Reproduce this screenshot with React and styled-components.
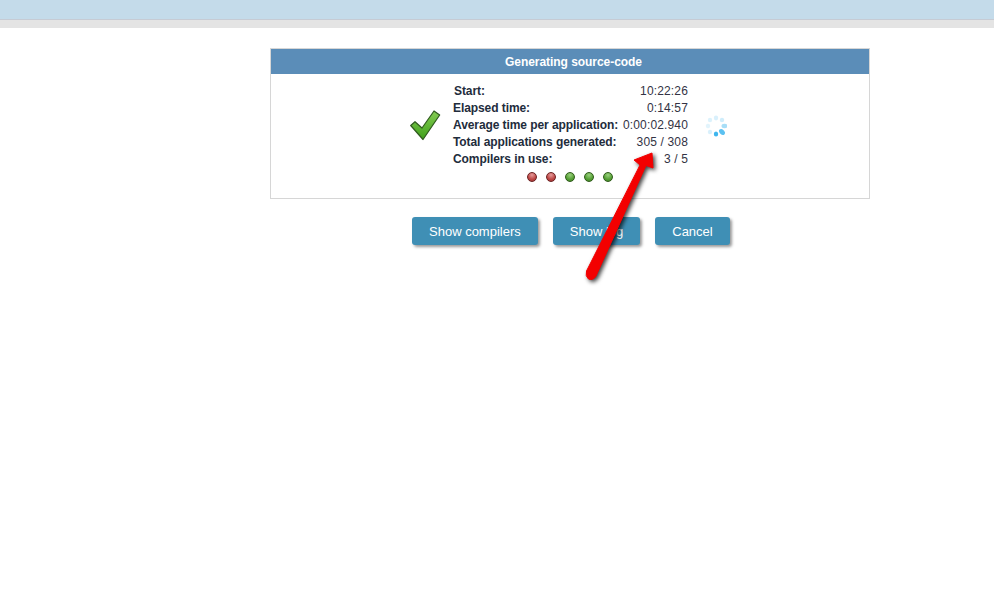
import React from "react";
import styled, { createGlobalStyle } from "styled-components";

const GlobalStyle = createGlobalStyle`
  html, body {
    margin: 0;
    padding: 0;
    background: #fff;
  }
  body {
    font-family: "Liberation Sans", Arial, sans-serif;
    font-size: 12px;
    color: #2a2a3a;
  }
`;

const Page = styled.div`
  position: relative;
  width: 994px;
  height: 614px;
  overflow: hidden;
`;

const TopBar = styled.div`
  height: 19px;
  background: #c4dbea;
  border-bottom: 1px solid #c6cbd4;
`;

const SubBar = styled.div`
  height: 8px;
  background: #e4e4e4;
`;

const Main = styled.div`
  width: 600px;
  margin: 20px 0 0 270px;
`;

const Panel = styled.section`
  box-sizing: border-box;
  height: 151px;
  border: 1px solid #d6d6d6;
`;

const PanelTitle = styled.h2`
  box-sizing: border-box;
  margin: 0;
  height: 25px;
  line-height: 26px;
  padding-left: 7px;
  background: #5b8db8;
  color: #fff;
  font-size: 12px;
  font-weight: bold;
  letter-spacing: -0.05px;
  text-align: center;
`;

const PanelBody = styled.div`
  padding-top: 9px;
`;

const Summary = styled.div`
  display: flex;
  justify-content: center;
  align-items: center;
  gap: 12px;
  padding-right: 4px;
`;

const StatsBlock = styled.div`
  width: 235px;
  margin-right: 5px;
`;

const Row = styled.div`
  display: flex;
  justify-content: space-between;
  height: 17px;
  line-height: 17px;
`;

const Label = styled.span`
  font-weight: bold;
  color: #222c3c;
  letter-spacing: -0.08px;
  padding-left: ${(p) => (p.$nudge ? "1px" : "0")};
`;

const Value = styled.span`
  color: #333344;
  letter-spacing: 0.15px;
`;

const Dots = styled.div`
  display: flex;
  justify-content: center;
  gap: 9px;
  margin-top: 4px;
`;

const Dot = styled.span`
  width: 10px;
  height: 10px;
  border-radius: 50%;
  box-sizing: border-box;
  border: 1px solid ${(p) => (p.$on ? "#2f5a1a" : "#6a2222")};
  background: ${(p) =>
    p.$on
      ? "radial-gradient(circle at 50% 25%, #9ad07e, #55a035 60%, #427f2a)"
      : "radial-gradient(circle at 50% 25%, #e59a9a, #bd4644 60%, #9c3434)"};
`;

const Actions = styled.div`
  display: flex;
  gap: 15px;
  margin: 18px 0 0 142px;
`;

const Button = styled.button`
  height: 28px;
  padding: 0 17px;
  border: none;
  border-radius: 3px;
  background: #3f8fb5;
  color: #fff;
  font-family: "Liberation Sans", Arial, sans-serif;
  font-size: 13px;
  box-shadow: 2px 2px 3px #9a9a9a;
`;

const ArrowLayer = styled.svg`
  position: absolute;
  left: 580px;
  top: 145px;
  filter: drop-shadow(2px 2px 2px rgba(0, 0, 0, 0.75));
`;

const CheckIcon = () => (
  <svg width="32" height="32" viewBox="0 0 32 32">
    <defs>
      <linearGradient id="checkFill" x1="0" y1="0" x2="0" y2="1">
        <stop offset="0" stopColor="#84cc52" />
        <stop offset="1" stopColor="#3fa01a" />
      </linearGradient>
    </defs>
    <path
      d="M1.7 15.5 L6 11.7 L13 18 L25 1 L30.7 5 L14 29.5 Z"
      fill="url(#checkFill)"
      stroke="#2f5a1e"
      strokeWidth="1.2"
      strokeLinejoin="round"
    />
  </svg>
);

// dots going round, last ones are the strongest
const spinnerDots = [
  { cx: 11, cy: 3, rx: 2.2, ry: 2.4, o: 0.2 },
  { cx: 17, cy: 5, rx: 2.2, ry: 2.2, o: 0.25 },
  { cx: 19.5, cy: 11, rx: 3, ry: 2.2, o: 0.45 },
  { cx: 17, cy: 17, rx: 3.4, ry: 2.3, o: 0.85, rot: 45 },
  { cx: 11, cy: 19, rx: 2.2, ry: 2.6, o: 1 },
  { cx: 5, cy: 17, rx: 2.2, ry: 2.2, o: 0.2 },
  { cx: 3, cy: 11, rx: 2.2, ry: 2.2, o: 0.15 },
  { cx: 5, cy: 5, rx: 2.2, ry: 2.2, o: 0.18 },
];

const Spinner = () => (
  <svg width="22" height="22" viewBox="0 0 22 22">
    {spinnerDots.map((d, i) => (
      <ellipse
        key={i}
        cx={d.cx}
        cy={d.cy}
        rx={d.rx}
        ry={d.ry}
        fill="#3fb6ee"
        opacity={d.o}
        transform={d.rot ? `rotate(${d.rot} ${d.cx} ${d.cy})` : undefined}
      />
    ))}
  </svg>
);

const rows = [
  { label: "Start:", value: "10:22:26", nudge: true },
  { label: "Elapsed time:", value: "0:14:57" },
  { label: "Average time per application:", value: "0:00:02.940" },
  { label: "Total applications generated:", value: "305 / 308" },
  { label: "Compilers in use:", value: "3 / 5" },
];

const compilers = [false, false, true, true, true];

export default function App() {
  return (
    <Page>
      <GlobalStyle />
      <TopBar />
      <SubBar />
      <Main>
        <Panel>
          <PanelTitle>Generating source-code</PanelTitle>
          <PanelBody>
            <Summary>
              <CheckIcon />
              <StatsBlock>
                {rows.map((r) => (
                  <Row key={r.label}>
                    <Label $nudge={r.nudge}>{r.label}</Label>
                    <Value>{r.value}</Value>
                  </Row>
                ))}
              </StatsBlock>
              <Spinner />
            </Summary>
            <Dots>
              {compilers.map((on, i) => (
                <Dot key={i} $on={on} />
              ))}
            </Dots>
          </PanelBody>
        </Panel>
        <Actions>
          <Button>Show compilers</Button>
          <Button>Show log</Button>
          <Button>Cancel</Button>
        </Actions>
      </Main>
      <ArrowLayer width="90" height="145" viewBox="0 0 90 145">
        <path
          d="M72 8 L73 23 L66 20.500 L16 131 Q13 136 8.500 134 Q5 131 6.500 126 L60 20 L54 15 Z"
          fill="#f30000"
          stroke="#f30000"
          strokeWidth="1"
          strokeLinejoin="round"
        />
      </ArrowLayer>
    </Page>
  );
}
